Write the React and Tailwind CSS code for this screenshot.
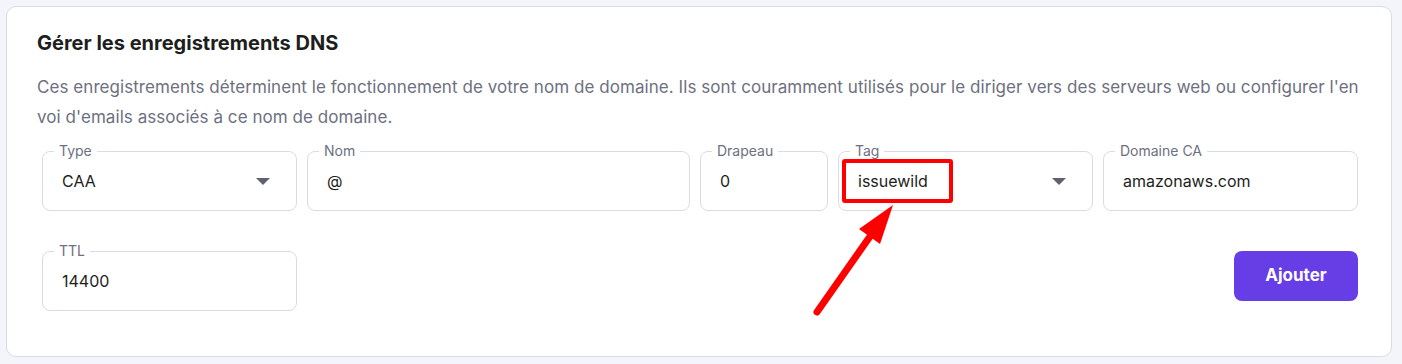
import React from "react";

const Field = ({ label, value, width, select, children }) => (
  <div
    className={`relative h-[60px] shrink-0 rounded-[8px] border border-[#dadce3] bg-white ${width}`}
  >
    <span className="absolute -top-[10px] left-[11px] bg-white px-[5px] text-[14px] leading-[18px] text-[#6d7081]">
      {label}
    </span>
    <div className="flex h-full items-center pl-[19px] pr-[26px]">
      <span className="flex-1 text-[16px] text-[#1d1e20]">{value}</span>
      {select && (
        <svg width="14" height="7" viewBox="0 0 14 7" className="shrink-0">
          <path d="M0 0h14L7 7z" fill="#5f6170" />
        </svg>
      )}
    </div>
    {children}
  </div>
);

export default function App() {
  return (
    <div className="relative min-h-[364px] bg-[#f4f4fb] pb-[6px] pl-[6px] pr-[10px] pt-[6px] font-['Inter',sans-serif]">
      <div className="rounded-[10px] border border-[#dadce3] bg-white pb-[45px] pl-[30px] pr-[33px] pt-[24px]">
        <h2 className="text-[20px] font-bold leading-[24px] text-[#1d1e20]">
          Gérer les enregistrements DNS
        </h2>
        <p className="mt-[17px] whitespace-nowrap text-[17px] leading-[30px] tracking-[0.06px] text-[#6d7081]">
          Ces enregistrements déterminent le fonctionnement de votre nom de domaine. Ils sont
          couramment utilisés pour le diriger vers des serveurs web ou configurer l'en
          <br />
          voi d'emails associés à ce nom de domaine.
        </p>

        <div className="ml-[5px] mt-[19px] flex gap-[10px]">
          <Field label="Type" value="CAA" width="w-[255px]" select />
          <Field label="Nom" value="@" width="w-[383px]" />
          <Field label="Drapeau" value="0" width="w-[128px]" />
          <Field label="Tag" value="issuewild" width="w-[255px]" select>
            <div className="absolute left-[3px] top-[7px] h-[44px] w-[111px] rounded-[3px] border-4 border-[#ff0000]" />
          </Field>
          <Field label="Domaine CA" value="amazonaws.com" width="w-[255px]" />
        </div>

        <div className="ml-[5px] mt-[40px] flex items-start justify-between">
          <Field label="TTL" value="14400" width="w-[255px]" />
          <button className="h-[50px] w-[124px] rounded-[8px] bg-[#673de6] text-[17px] font-bold text-white">
            Ajouter
          </button>
        </div>
      </div>

      <svg
        className="pointer-events-none absolute left-0 top-0"
        width="1402"
        height="364"
        viewBox="0 0 1402 364"
      >
        <line x1="817" y1="312" x2="871" y2="235" stroke="#ff0000" strokeWidth="7" strokeLinecap="round" />
        <polygon points="893,205 859,229 880,244" fill="#ff0000" />
      </svg>
    </div>
  );
}
